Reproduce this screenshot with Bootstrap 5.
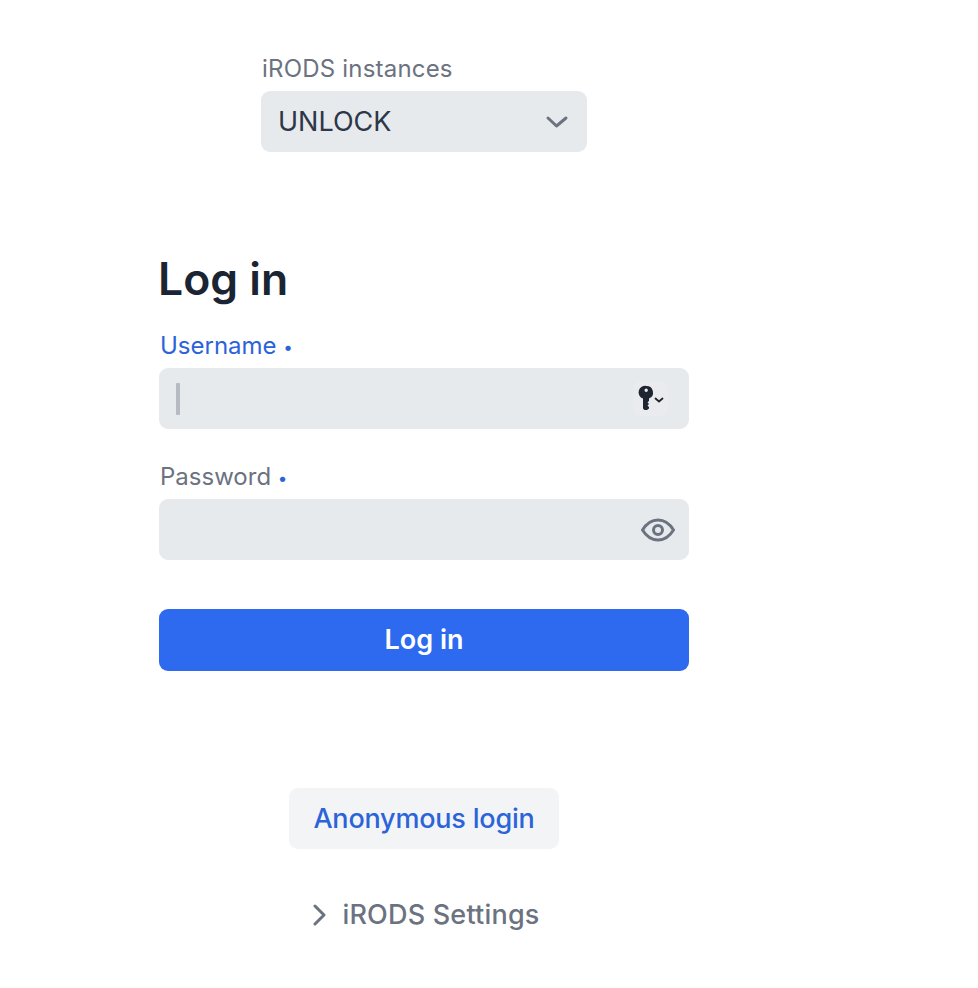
<!DOCTYPE html>
<html lang="en">
<head>
    <meta charset="UTF-8">
    <meta name="viewport" content="width=device-width, initial-scale=1.0">
    <title>Log in</title>
    <link href="https://cdn.jsdelivr.net/npm/bootstrap@5.3.0/dist/css/bootstrap.min.css" rel="stylesheet">
    <style>
        body {
            font-family: Inter, "Liberation Sans", sans-serif;
            font-size: 24px;
            background: #fff;
            color: #1a202c;
        }
        .login-col {
            width: 530px;
            margin-left: 159px;
            padding-top: 54px;
        }
        .instance-box {
            width: 326px;
        }
        .field-label {
            display: block;
            font-size: 24px;
            line-height: 30px;
            letter-spacing: .2px;
            color: #6b7280;
            margin: 0 0 7px 1px;
        }
        form .field-label {
            letter-spacing: 0;
            margin-bottom: 6px;
        }
        .field-label.active {
            color: #2b63d9;
        }
        .req-dot {
            color: #2b63d9;
            font-size: 17px;
            vertical-align: 1px;
        }
        .field-wrap {
            position: relative;
        }
        .field-wrap.gap-after {
            margin-bottom: 33px;
        }
        .form-control.soft-input,
        .form-select.soft-input {
            height: 61px;
            border: 0;
            border-radius: 9px;
            background-color: #e7eaed;
            font-size: 27px;
            color: #2d3748;
            padding: 2px 17px 0;
            box-shadow: none;
        }
        .form-select.soft-input {
            background-image: none;
        }
        .field-icon {
            position: absolute;
            top: 0;
            bottom: 0;
            margin: auto 0;
        }
        .icon-chevron { right: 18px; }
        .icon-key { right: 21px; }
        .icon-eye { right: 14px; }
        .fake-caret {
            position: absolute;
            left: 17px;
            top: 15px;
            width: 4px;
            height: 32px;
            border-radius: 1px;
            background: #b6bac1;
        }
        .login-title {
            font-family: Inter, "Liberation Sans", sans-serif;
            font-size: 44.5px;
            font-weight: 600;
            line-height: 54px;
            color: #1a2433;
            margin: 100px 0 25px -1px;
        }
        .btn.btn-login {
            height: 62px;
            margin-top: 49px;
            border: 0;
            border-radius: 9px;
            padding: 1px 0 0;
            background: #2d6af0;
            color: #fff;
            font-size: 27px;
            font-weight: 600;
        }
        .btn.btn-anon {
            width: 270px;
            height: 61px;
            margin-top: 117px;
            border: 0;
            border-radius: 9px;
            background: #f3f4f6;
            color: #2b63d9;
            font-size: 27px;
            font-weight: 500;
            letter-spacing: -.2px;
            padding: 2px 0 0;
        }
        .settings-toggle {
            margin: 49px 0 0 4px;
            font-size: 27px;
            font-weight: 500;
            letter-spacing: .2px;
            color: #6b7280;
            line-height: 34px;
        }
    </style>
</head>
<body>

<div class="login-col">
    <div class="instance-box mx-auto">
        <label class="field-label" for="instance">iRODS instances</label>
        <div class="field-wrap">
            <select id="instance" class="form-select soft-input">
                <option>UNLOCK</option>
            </select>
            <svg class="field-icon icon-chevron" width="24" height="14" viewBox="0 0 24 14" fill="none" stroke="#6b7280" stroke-width="3" stroke-linecap="round" stroke-linejoin="round"><path d="M3 3l8.500 8L21 3"/></svg>
        </div>
    </div>

    <h1 class="login-title">Log in</h1>

    <form>
        <label class="field-label active" for="username">Username <span class="req-dot">•</span></label>
        <div class="field-wrap gap-after">
            <input id="username" type="text" class="form-control soft-input">
            <span class="fake-caret"></span>
            <svg class="field-icon icon-key" width="35" height="35" viewBox="0 0 35 35"><rect width="35" height="35" rx="7" fill="#e9ebee"/><path fill="#1f2530" fill-rule="evenodd" d="M13.500 5a6.500 6.500 0 0 1 2.500 12.500V20l-1.500 1.300L16 23l-1.500 1.500L16 26v1.500L14 29h-2.500l-1.500-1.500v-10A6.500 6.500 0 0 1 13.500 5zm-.3 2.500a1.700 1.700 0 1 0 0 3.400 1.700 1.700 0 0 0 0-3.400z"/><path d="M22.500 17.500l3.500 3 3.500-3" fill="none" stroke="#1f2530" stroke-width="1.800" stroke-linecap="round" stroke-linejoin="round"/></svg>
        </div>

        <label class="field-label" for="password">Password <span class="req-dot">•</span></label>
        <div class="field-wrap">
            <input id="password" type="password" class="form-control soft-input">
            <svg class="field-icon icon-eye" width="34" height="24" viewBox="0 0 34 24" fill="none" stroke="#6b7280" stroke-width="3"><path d="M1.500 12C5.500 5.500 10.500 2 17 2s11.500 3.500 15.500 10c-4 6.500-9 10-15.500 10S5.500 18.500 1.500 12z"/><circle cx="17" cy="12" r="4.500"/></svg>
        </div>

        <button type="button" class="btn btn-login w-100">Log in</button>
    </form>

    <div class="d-flex flex-column align-items-center">
        <button type="button" class="btn btn-anon">Anonymous login</button>
        <div class="settings-toggle d-flex align-items-center gap-3">
            <svg width="14" height="22" viewBox="0 0 14 22" fill="none" stroke="#6b7280" stroke-width="3" stroke-linecap="round" stroke-linejoin="round"><path d="M3 2l9 9-9 9"/></svg>
            <span>iRODS Settings</span>
        </div>
    </div>
</div>

<script src="https://cdn.jsdelivr.net/npm/bootstrap@5.3.0/dist/js/bootstrap.bundle.min.js"></script>
</body>
</html>
